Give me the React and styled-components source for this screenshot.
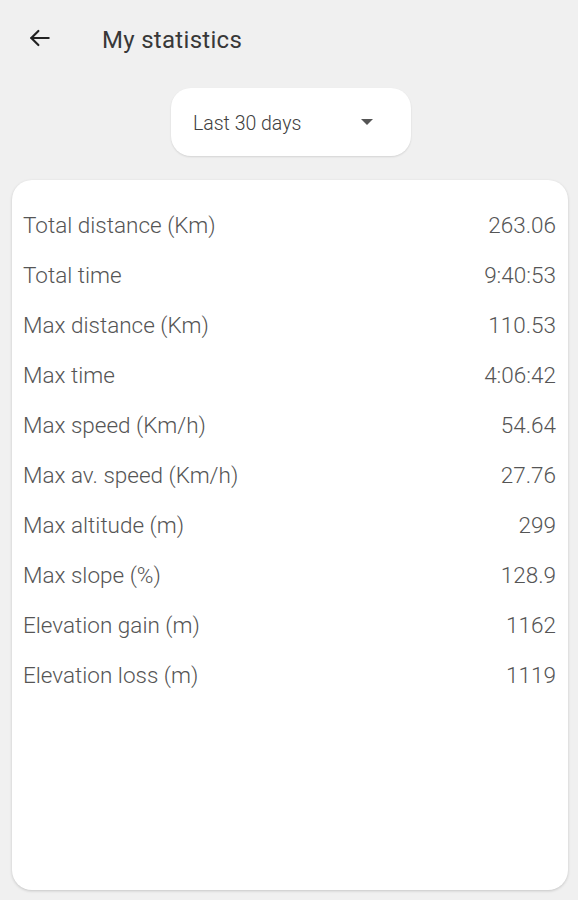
import React from 'react'
import styled, { createGlobalStyle } from 'styled-components'

const stats = [
	{ label: 'Total distance (Km)', value: '263.06' },
	{ label: 'Total time', value: '9:40:53' },
	{ label: 'Max distance (Km)', value: '110.53' },
	{ label: 'Max time', value: '4:06:42' },
	{ label: 'Max speed (Km/h)', value: '54.64' },
	{ label: 'Max av. speed (Km/h)', value: '27.76' },
	{ label: 'Max altitude (m)', value: '299' },
	{ label: 'Max slope (%)', value: '128.9' },
	{ label: 'Elevation gain (m)', value: '1162' },
	{ label: 'Elevation loss (m)', value: '1119' },
]

const App = () => {
	return (
		<>
			<GlobalStyle />
			<S.Page>
				<S.Header>
					<S.Back aria-label="back">
						<svg width="26" height="26" viewBox="0 0 24 24" fill="none" stroke="#222" strokeWidth="2" strokeLinecap="round" strokeLinejoin="round">
							<path d="M20 12H4" />
							<path d="M10.5 5.5 4 12l6.5 6.5" />
						</svg>
					</S.Back>
					<S.Title>My statistics</S.Title>
				</S.Header>
				<S.SelectRow>
					<S.Select>
						<span>Last 30 days</span>
						<S.Caret />
					</S.Select>
				</S.SelectRow>
				<S.Card>
					{stats.map(s => (
						<S.Row key={s.label}>
							<span>{s.label}</span>
							<span>{s.value}</span>
						</S.Row>
					))}
				</S.Card>
			</S.Page>
		</>
	)
}

export default App

const GlobalStyle = createGlobalStyle`
	html, body {
		margin: 0;
		background: #f0f0f0;
		font-family: Roboto, "Noto Sans", sans-serif;
	}
`

const S = {}

S.Page = styled.div`
	width: 578px;
	height: 900px;
	box-sizing: border-box;
	display: flex;
	flex-direction: column;
	padding: 0 10px 10px 12px;
	background: #f0f0f0;
`
S.Header = styled.div`
	height: 80px;
	display: flex;
	align-items: center;
	padding-left: 15px;
`
S.Back = styled.div`
	width: 26px;
	height: 26px;
	display: flex;
	margin-right: 49px;
	margin-top: -4px;
`
S.Title = styled.h1`
	margin: 0;
	font-size: 24px;
	font-weight: 400;
	color: #383838;
	letter-spacing: 0.3px;
`
S.SelectRow = styled.div`
	display: flex;
	justify-content: center;
	padding-top: 8px;
	padding-left: 2px;
`
S.Select = styled.div`
	width: 240px;
	height: 68px;
	box-sizing: border-box;
	background: #fff;
	border-radius: 20px;
	box-shadow: 0 1px 2px rgba(0, 0, 0, 0.12);
	display: flex;
	align-items: center;
	padding: 2px 38px 0 22px;
	justify-content: space-between;
	font-size: 19.5px;
	font-weight: 300;
	color: #404040;
`
S.Caret = styled.span`
	width: 0;
	height: 0;
	border-left: 6px solid transparent;
	border-right: 6px solid transparent;
	border-top: 6px solid #555;
	margin-top: -2px;
`
S.Card = styled.div`
	flex: 1;
	margin-top: 24px;
	background: #fff;
	border-radius: 20px;
	box-shadow: 0 1px 3px rgba(0, 0, 0, 0.18);
	padding: 20px 12px 0 11px;
	display: flex;
	flex-direction: column;
`
S.Row = styled.div`
	height: 50px;
	display: flex;
	justify-content: space-between;
	align-items: center;
	font-size: 22.5px;
	font-weight: 300;
	color: #555;
`
